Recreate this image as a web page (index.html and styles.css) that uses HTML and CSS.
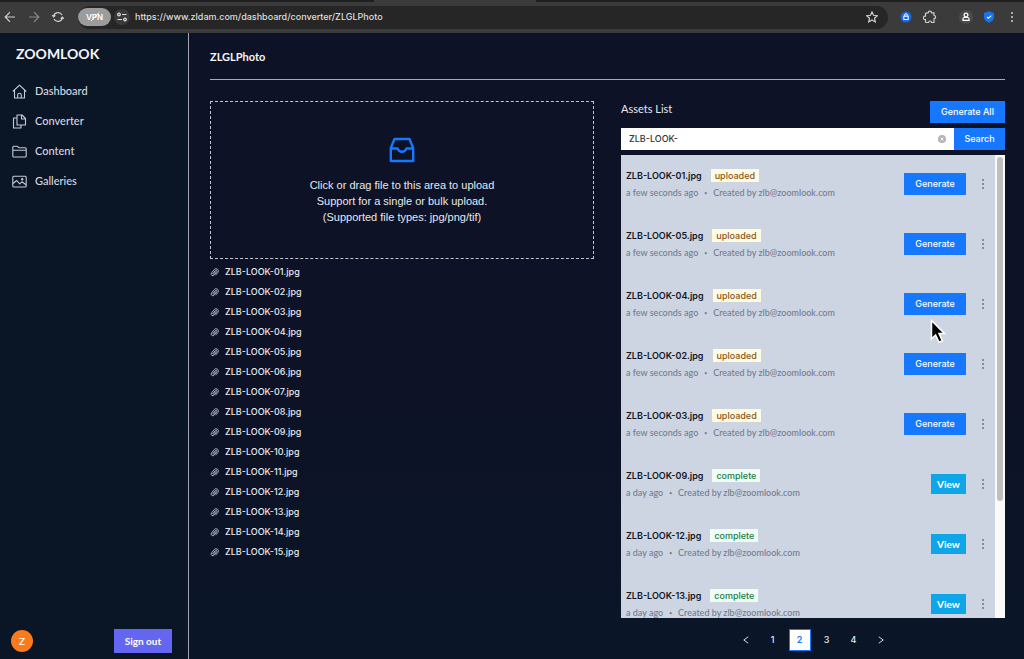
FILE: index.html
```html
<!DOCTYPE html>
<html lang="en">
<head>
<meta charset="utf-8">
<title>ZOOMLOOK Converter</title>
<link rel="stylesheet" href="styles.css">
</head>
<body>
<svg class="defs" aria-hidden="true">
  <symbol id="clip" viewBox="0 0 12 12"><path d="M3.200 8.200 7 3.400a1.300 1.300 0 0 1 2.100 1.700L5.600 9.500a2.300 2.300 0 0 1-3.600-2.900L5.600 2.100a3.100 3.100 0 0 1 4.900 3.800L7.600 9.500M4.400 8.700l3.400-4.200" fill="none" stroke="currentColor" stroke-width="1.200"/></symbol>
  <symbol id="more" viewBox="0 0 4 12"><circle cx="2" cy="2" r="1"/><circle cx="2" cy="6" r="1"/><circle cx="2" cy="10" r="1"/></symbol>
</svg>
<div class="window">
  <header class="browser">
    <div class="tabs"><div class="tab"></div></div>
    <div class="toolbar">
      <div class="nav-buttons">
        <button class="tool" aria-label="Back"><svg width="12" height="12" viewBox="0 0 12 12"><path d="M11 6H1.500M6 1.200 1.200 6 6 10.800"/></svg></button>
        <button class="tool dim" aria-label="Forward"><svg width="12" height="12" viewBox="0 0 12 12"><path d="M1 6h9.500M6 1.200 10.800 6 6 10.800"/></svg></button>
        <button class="tool" aria-label="Reload"><svg width="12" height="12" viewBox="0 0 12 12"><path d="M1.600 5.200A4.500 4.500 0 0 1 10 4M10.400 6.800A4.500 4.500 0 0 1 2 8M.2 4l1.400 1.800L3.400 4.400M11.800 8l-1.400-1.800L8.600 7.600"/></svg></button>
      </div>
      <div class="address">
        <span class="vpn">VPN<svg width="18" height="12" viewBox="0 0 18 12"><path d="M5 10 13 1.500"/></svg></span>
        <span class="site"><svg width="10" height="10" viewBox="0 0 10 10"><circle cx="2" cy="2.500" r="1.300"/><path d="M5 2.500h4.500M.5 7.500H5"/><circle cx="8" cy="7.500" r="1.300"/></svg></span>
        <input class="url" aria-label="Address" value="https://www.zldam.com/dashboard/converter/ZLGLPhoto">
        <button class="tool" aria-label="Bookmark"><svg width="12" height="12" viewBox="0 0 12 12"><path d="m6 .9 1.500 3.400 3.800.4-2.800 2.500.8 3.700L6 9l-3.300 1.900.8-3.700L.7 4.700l3.800-.4z"/></svg></button>
      </div>
      <div class="extensions">
        <svg class="ext" width="12" height="12" viewBox="0 0 12 12"><circle cx="6" cy="6" r="5.500" fill="#1668e3"/><rect x="3.800" y="5.200" width="4.400" height="3.300" fill="none" stroke="#fff"/><path d="M4.700 5V4a1.300 1.300 0 0 1 2.600 0v1" fill="none" stroke="#fff"/></svg>
        <svg class="ext" width="14" height="14" viewBox="0 0 14 14"><path d="M3.500 2.800h1.800a1.600 1.600 0 0 1 3.200 0H11V5.500a1.600 1.600 0 0 1 0 3.200V12.500H8.600a1.500 1.500 0 0 0-3 0H3.500a1 1 0 0 1-1-1V9.400a1.700 1.700 0 1 1 0-3.200V3.800a1 1 0 0 1 1-1z" fill="none" stroke="#cfcfcf" stroke-width="1.200" stroke-linejoin="round"/></svg>
        <svg class="ext profile" width="14" height="14" viewBox="0 0 14 14"><circle cx="7" cy="7" r="7" fill="#4b4b4b"/><circle cx="7" cy="5" r="1.900" fill="none" stroke="#fff" stroke-width="1.200"/><path d="M4 10.300V9a1.500 1.500 0 0 1 1.500-1.500h3A1.500 1.500 0 0 1 10 9v1.300z" fill="none" stroke="#fff" stroke-width="1.200"/></svg>
        <svg class="ext" width="12" height="12" viewBox="0 0 12 12"><path d="M6 .3 11 2v4c0 3-2 4.700-5 5.700C3 10.700 1 9 1 6V2z" fill="#1473ee"/><path d="m4 6 1.400 1.300L8.200 4.600" fill="none" stroke="#fff" stroke-width="1.100"/></svg>
        <button class="tool menu" aria-label="Menu"><svg width="4" height="12"><use href="#more"/></svg></button>
      </div>
    </div>
  </header>

  <div class="app">
    <aside class="sidebar">
      <div class="logo">ZOOMLOOK</div>
      <nav class="links">
        <a href="#"><svg width="15" height="15" viewBox="0 0 15 15"><path d="M.8 7.500 7.500 1.200l6.700 6.300M2.500 6v8h10V6M5.700 14v-3a1.800 1.800 0 0 1 3.600 0v3"/></svg>Dashboard</a>
        <a href="#"><svg width="15" height="15" viewBox="0 0 15 15"><path d="M5 1h5l3.500 3.500V11H5zM9.500 1v4h4M5 4H1.500v10H9v-3"/></svg>Converter</a>
        <a href="#"><svg width="15" height="15" viewBox="0 0 15 15"><path d="M.8 12V3.200c0-.6.400-1 1-1h3.400l1.700 1.600h6.300c.6 0 1 .4 1 1V12c0 .6-.4 1-1 1H1.800c-.6 0-1-.4-1-1zM.8 6.300h13.400"/></svg>Content</a>
        <a href="#"><svg width="15" height="15" viewBox="0 0 15 15"><rect x=".8" y="2.300" width="13.400" height="10.700" rx="1"/><path d="m1 9.500 3.700-3 3 3.300 2.300-2 4 3"/><circle cx="10.200" cy="5.300" r=".7"/></svg>Galleries</a>
      </nav>
      <div class="account"><span class="avatar">Z</span><button class="signout">Sign out</button></div>
    </aside>

    <main class="main">
      <h1>ZLGLPhoto</h1>
      <div class="columns">
        <section class="uploads">
          <button class="drop">
            <svg width="26" height="26" viewBox="0 0 26 26"><path d="M5.500 2h15L24.200 11v13H1.800V11zM1.800 11.500h6.800c.6 2 2 3.300 4.400 3.300s3.800-1.300 4.400-3.300h6.800"/></svg>
            <span>Click or drag file to this area to upload</span>
            <span>Support for a single or bulk upload.</span>
            <span>(Supported file types: jpg/png/tif)</span>
          </button>
          <ul class="files">
            <li><svg><use href="#clip"/></svg>ZLB-LOOK-01.jpg</li>
            <li><svg><use href="#clip"/></svg>ZLB-LOOK-02.jpg</li>
            <li><svg><use href="#clip"/></svg>ZLB-LOOK-03.jpg</li>
            <li><svg><use href="#clip"/></svg>ZLB-LOOK-04.jpg</li>
            <li><svg><use href="#clip"/></svg>ZLB-LOOK-05.jpg</li>
            <li><svg><use href="#clip"/></svg>ZLB-LOOK-06.jpg</li>
            <li><svg><use href="#clip"/></svg>ZLB-LOOK-07.jpg</li>
            <li><svg><use href="#clip"/></svg>ZLB-LOOK-08.jpg</li>
            <li><svg><use href="#clip"/></svg>ZLB-LOOK-09.jpg</li>
            <li><svg><use href="#clip"/></svg>ZLB-LOOK-10.jpg</li>
            <li><svg><use href="#clip"/></svg>ZLB-LOOK-11.jpg</li>
            <li><svg><use href="#clip"/></svg>ZLB-LOOK-12.jpg</li>
            <li><svg><use href="#clip"/></svg>ZLB-LOOK-13.jpg</li>
            <li><svg><use href="#clip"/></svg>ZLB-LOOK-14.jpg</li>
            <li><svg><use href="#clip"/></svg>ZLB-LOOK-15.jpg</li>
          </ul>
        </section>

        <section class="assets">
          <div class="assets-head"><h2>Assets List</h2><button class="primary all">Generate All</button></div>
          <form class="search">
            <input aria-label="Search assets" value="ZLB-LOOK-">
            <button type="reset" class="clear" aria-label="Clear"><svg width="8" height="8" viewBox="0 0 8 8"><circle cx="4" cy="4" r="4" fill="#b4b4b4"/><path d="m2.600 2.600 2.800 2.800m0-2.800L2.600 5.400" stroke="#fff"/></svg></button>
            <button type="button" class="primary find">Search</button>
          </form>
          <div class="panel">
            <ul class="list">
              <li><div class="info"><div class="name">ZLB-LOOK-01.jpg<span class="tag">uploaded</span></div><div class="meta">a few seconds ago<i>•</i>Created by zlb@zoomlook.com</div></div><button class="primary generate">Generate</button><button class="more" aria-label="More"><svg width="4" height="12"><use href="#more"/></svg></button></li>
              <li><div class="info"><div class="name">ZLB-LOOK-05.jpg<span class="tag">uploaded</span></div><div class="meta">a few seconds ago<i>•</i>Created by zlb@zoomlook.com</div></div><button class="primary generate">Generate</button><button class="more" aria-label="More"><svg width="4" height="12"><use href="#more"/></svg></button></li>
              <li><div class="info"><div class="name">ZLB-LOOK-04.jpg<span class="tag">uploaded</span></div><div class="meta">a few seconds ago<i>•</i>Created by zlb@zoomlook.com</div></div><button class="primary generate">Generate</button><button class="more" aria-label="More"><svg width="4" height="12"><use href="#more"/></svg></button></li>
              <li><div class="info"><div class="name">ZLB-LOOK-02.jpg<span class="tag">uploaded</span></div><div class="meta">a few seconds ago<i>•</i>Created by zlb@zoomlook.com</div></div><button class="primary generate">Generate</button><button class="more" aria-label="More"><svg width="4" height="12"><use href="#more"/></svg></button></li>
              <li><div class="info"><div class="name">ZLB-LOOK-03.jpg<span class="tag">uploaded</span></div><div class="meta">a few seconds ago<i>•</i>Created by zlb@zoomlook.com</div></div><button class="primary generate">Generate</button><button class="more" aria-label="More"><svg width="4" height="12"><use href="#more"/></svg></button></li>
              <li><div class="info"><div class="name">ZLB-LOOK-09.jpg<span class="tag done">complete</span></div><div class="meta">a day ago<i>•</i>Created by zlb@zoomlook.com</div></div><button class="view">View</button><button class="more" aria-label="More"><svg width="4" height="12"><use href="#more"/></svg></button></li>
              <li><div class="info"><div class="name">ZLB-LOOK-12.jpg<span class="tag done">complete</span></div><div class="meta">a day ago<i>•</i>Created by zlb@zoomlook.com</div></div><button class="view">View</button><button class="more" aria-label="More"><svg width="4" height="12"><use href="#more"/></svg></button></li>
              <li><div class="info"><div class="name">ZLB-LOOK-13.jpg<span class="tag done">complete</span></div><div class="meta">a day ago<i>•</i>Created by zlb@zoomlook.com</div></div><button class="view">View</button><button class="more" aria-label="More"><svg width="4" height="12"><use href="#more"/></svg></button></li>
            </ul>
            <div class="track"><div class="thumb"></div></div>
          </div>
          <nav class="pager" aria-label="Pages">
            <a href="#" aria-label="Previous"><svg width="6" height="8" viewBox="0 0 6 8"><path d="M5.200.8.800 4l4.400 3.200"/></svg></a>
            <a href="#">1</a><a href="#" class="current">2</a><a href="#">3</a><a href="#">4</a>
            <a href="#" aria-label="Next"><svg width="6" height="8" viewBox="0 0 6 8"><path d="M.8.800 5.200 4 .8 7.200"/></svg></a>
          </nav>
        </section>
      </div>
    </main>
  </div>
</div>
<svg class="cursor" width="16" height="26" viewBox="0 0 16 26" aria-hidden="true"><path d="M1.500 1.500v18.200l4.100-3.800 3.400 7.400 3.300-1.500-3.300-7.200h5.600z" fill="#000" stroke="#fff" stroke-width="1.500"/></svg>
</body>
</html>
```

FILE: styles.css
```css
* { box-sizing: border-box; }
body { margin: 0; font: 500 9px/16px Inter, "Liberation Sans", sans-serif; color: #e6e8ee; background: #0d1226; }
button, input { font: inherit; border: 0; margin: 0; padding: 0; color: inherit; background: none; border-radius: 0; }
button { cursor: pointer; }
a { color: inherit; text-decoration: none; }
ul { list-style: none; margin: 0; padding: 0; }
h1, h2 { margin: 0; }
svg { display: block; flex: none; }
.defs { position: absolute; width: 0; height: 0; }
.window { display: flex; flex-direction: column; height: 100vh; }

.browser { background: #3b3b3b; flex: none; }
.tabs { height: 2px; background: #202020; padding: 0 488px 0 34px; }
.tab { height: 2px; background: #3b3b3b; margin-left: 340px; }
.toolbar { display: flex; align-items: center; height: 31px; padding: 0 8px 1px 4px; }
.nav-buttons { display: flex; gap: 12px; width: 74px; }
.tool { display: grid; place-items: center; width: 12px; height: 12px; color: #cfcfcf; }
.tool path { fill: none; stroke: currentColor; stroke-width: 1.2; }
.tool.dim { color: #8a8a8a; }
.address { display: flex; align-items: center; flex: 1; height: 23px; background: #262626; border-radius: 12px; padding-right: 10px; }
.vpn { display: grid; place-items: center; width: 33px; height: 18px; border-radius: 9px; background: #9c9c9c; color: #fff; font-size: 8px; font-weight: 600; }
.vpn > svg { position: absolute; }
.vpn path { stroke: #fff; fill: none; }
.site { display: grid; place-items: center; width: 16px; height: 16px; margin: 0 5px 0 3px; border-radius: 8px; background: #3a3a3a; }
.site svg { fill: none; stroke: #e0e0e0; stroke-width: 1.2; }
.url { flex: 1; min-width: 0; color: #dedede; }
.extensions { display: flex; align-items: center; justify-content: flex-end; width: 128px; }
.ext { margin-right: 11px; }
.ext.profile { margin: 0 10px 0 11px; }
.ext:last-of-type { margin-right: 13px; }
.tool.menu { width: 8px; }
.tool.menu svg { fill: #cfcfcf; }

.app { display: flex; flex: 1; min-height: 0; background: linear-gradient(#0d1226 60%, #0a1628 100%); }
.sidebar, h1, h2, .meta, .view { font-family: Lato, "Liberation Sans", sans-serif; }
.sidebar { display: flex; flex-direction: column; width: 189px; flex: none; border-right: 1px solid #a3a6b0; background: #0a1526; padding: 11px 16px 6px 11px; }
.logo { font-size: 14px; line-height: 20px; font-weight: 700; padding-left: 5px; color: #f4f5f7; }
.links { display: flex; flex-direction: column; gap: 14px; margin-top: 19px; }
.links a { display: flex; align-items: center; gap: 8px; padding-left: 1px; font-size: 11px; line-height: 16px; color: #d5d9e2; }
.links svg { fill: none; stroke: #c5cad5; stroke-width: 1.1; stroke-linejoin: round; }
.account { display: flex; justify-content: space-between; align-items: center; margin-top: auto; }
.avatar { display: grid; place-items: center; width: 22px; height: 22px; border-radius: 50%; background: #fa7a1c; color: #fff; font-size: 10px; }
.signout { width: 58px; height: 24px; background: #6466f1; color: #fff; font-size: 10px; font-weight: 700; }

.main { display: flex; flex-direction: column; flex: 1; min-width: 0; padding: 14px 19px 8px 21px; }
h1 { font-size: 11px; line-height: 20px; font-weight: 700; color: #f4f5f7; padding-bottom: 12px; border-bottom: 1px solid #a7abb8; }
.columns { display: grid; grid-template-columns: 1fr 1fr; grid-template-rows: minmax(0, 1fr); gap: 27px; flex: 1; min-height: 0; margin-top: 21px; }
.drop { display: flex; flex-direction: column; align-items: center; justify-content: center; width: 100%; height: 158px; padding-top: 2px; border: 1px dashed #c3c5cf; font: 11px/16px "Liberation Sans", Arial, sans-serif; }
.drop svg { margin-bottom: 14px; fill: none; stroke: #1677ff; stroke-width: 2.4; stroke-linejoin: round; }
.files { padding-top: 3px; }
.files li { display: flex; align-items: center; gap: 6px; height: 20px; }
.files svg { width: 9px; height: 9px; color: #b5b9c5; }

.assets { display: flex; flex-direction: column; min-height: 0; min-width: 0; }
.assets-head { display: flex; justify-content: space-between; }
h2 { font-size: 11px; line-height: 16px; font-weight: 400; }
.primary { height: 22px; background: #1677ff; color: #fff; }
.all { width: 75px; }
.search { display: flex; height: 22px; margin: 5px 0; background: #fff; }
.search input { flex: 1; min-width: 0; padding: 0 8px; color: #333; }
.clear { padding: 0 8px; }
.find { width: 51px; }
.panel { display: flex; flex: 1; min-height: 0; overflow: hidden; background: #cdd5e3; }
.list { flex: 1; min-width: 0; }
.list li { display: flex; align-items: center; height: 60px; padding: 0 8px 2px 5px; }
.info { flex: 1; min-width: 0; }
.name { display: flex; align-items: center; gap: 9px; font-weight: 600; color: #111827; }
.tag { padding: 0 4px; line-height: 13px; font-weight: 500; color: #8a5520; background: #fefbe3; }
.tag.done { color: #1e7b42; background: #f0fdf4; }
.meta { margin-top: 2px; line-height: 14px; color: #727c90; }
.meta i { margin: 0 6px; font-size: 5px; font-style: normal; vertical-align: middle; }
.generate { width: 62px; }
.view { width: 35px; height: 20px; background: #0ea5e9; color: #fff; font-size: 10px; font-weight: 700; }
.more { width: 8px; margin-left: 13px; display: grid; place-items: center; fill: #69738a; }
.track { width: 10px; padding: 2px; background: #fafafa; }
.thumb { height: 75%; border-radius: 3px; background: #bfbfbf; }
.pager { display: flex; justify-content: center; gap: 5px; margin-top: 11px; }
.pager a { display: grid; place-items: center; width: 22px; height: 22px; }
.pager path { fill: none; stroke: #d5d9e2; }
.pager .current { background: #fff; border: 1px solid #1677ff; color: #1677ff; font-weight: 600; }
.cursor { position: absolute; left: 930px; top: 319px; }
```
